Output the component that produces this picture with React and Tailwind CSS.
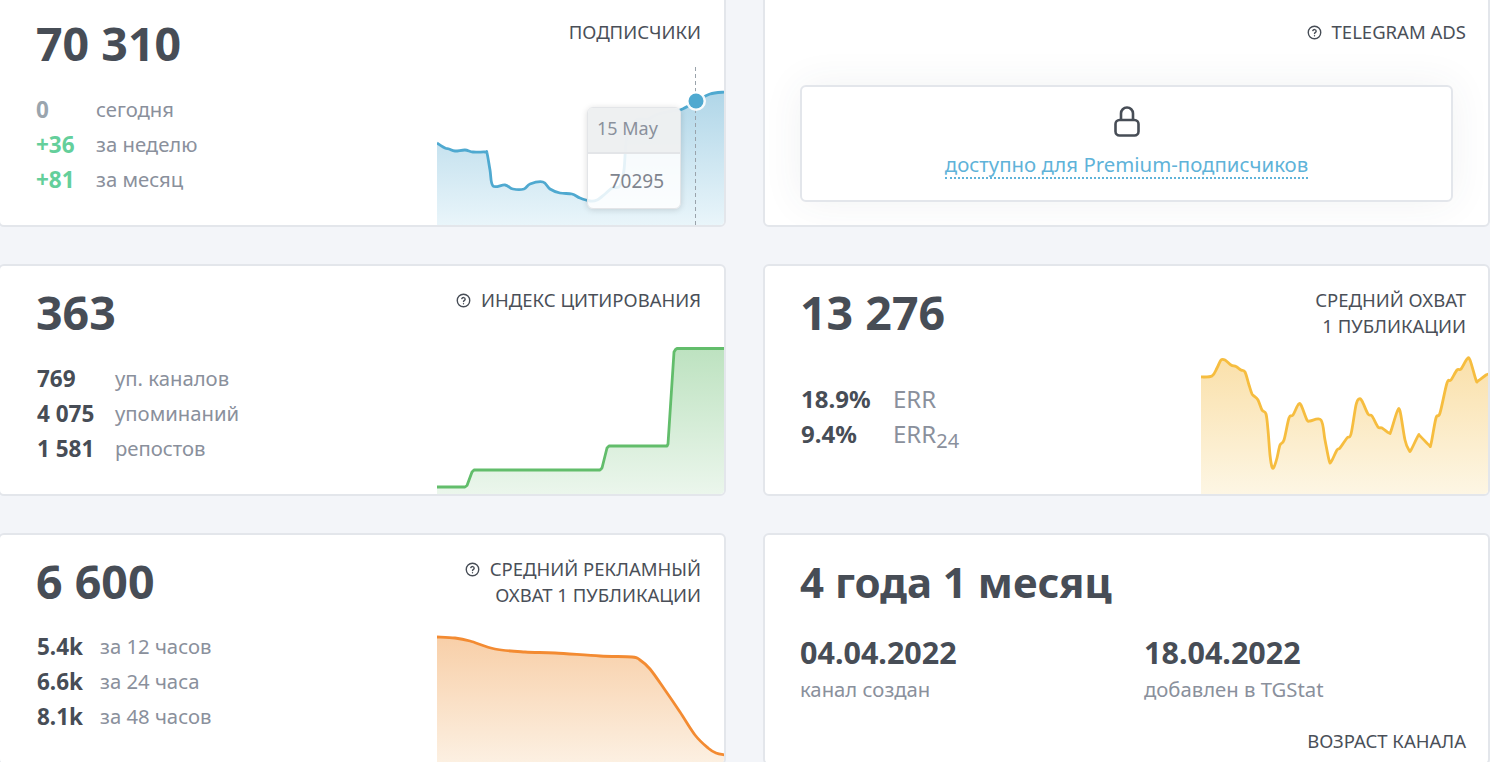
import React from 'react';

// catmull-rom -> cubic bezier, так линии графиков выглядят сглаженными
const smooth = (pts) => {
  let d = `M${pts[0][0]} ${pts[0][1]}`;
  for (let i = 0; i < pts.length - 1; i++) {
    const p0 = pts[i - 1] || pts[i];
    const p1 = pts[i];
    const p2 = pts[i + 1];
    const p3 = pts[i + 2] || p2;
    const c1x = p1[0] + (p2[0] - p0[0]) / 6;
    const c1y = p1[1] + (p2[1] - p0[1]) / 6;
    const c2x = p2[0] - (p3[0] - p1[0]) / 6;
    const c2y = p2[1] - (p3[1] - p1[1]) / 6;
    d += ` C${c1x} ${c1y} ${c2x} ${c2y} ${p2[0]} ${p2[1]}`;
  }
  return d;
};

const straight = (pts) => 'M' + pts.map((p) => `${p[0]} ${p[1]}`).join(' L');

const blue = [[437,143],[445,148],[449,149],[455,151],[465,150],[473,152],[485,152],[487,153],[490,170],[493,186],[505,185],[513,189],[524,189],[530,184],[543,182],[550,189],[560,193],[572,194],[580,198],[590,201],[597,200],[605,194],[612,188],[620,186],[624,170],[627,135],[636,120],[648,119],[658,114],[672,111],[680,110],[690,105],[697,101],[710,94],[725,92]];
const green = [[437,487],[465,487],[467,485.5],[472,472],[474,470],[600,470],[602,468],[607,448],[609,446],[667,446],[668,444],[674,352],[675.5,349.5],[677,348.5],[725,348.5]];
const yellow = [[1201,377],[1212,376],[1217,368],[1221,360],[1225,360],[1231,365],[1236,366.5],[1241,370],[1245,372],[1249,385],[1252,394],[1254,396],[1258,400],[1262,410],[1266,414],[1268,430],[1270,455],[1272,467],[1274,467],[1277,458],[1280,445],[1284,440],[1289,418],[1293,415],[1298,405],[1301,405],[1307,420],[1310,421],[1321,420],[1325,440],[1329,460],[1331,462],[1337,450],[1340,448],[1347,438],[1351,434],[1356,405],[1359,399],[1362,401],[1368,414],[1372,416],[1378,427],[1382,428],[1389,433],[1391,431],[1397,412],[1400,411],[1405,440],[1409,450],[1411,450],[1418,436],[1420,436],[1429,445],[1431,444],[1436,418],[1440,413],[1447,383],[1451,380],[1457,370],[1461,369],[1467,359],[1470,360],[1476,380],[1478,381],[1486,375],[1489,374]];
const orange = [[437,637],[455,638],[470,641],[495,649],[525,652],[555,653],[600,656],[632,657],[640,660],[650,669],[665,690],[680,712],[695,735],[708,748],[716,753],[725,755]];

const Chart = ({ id, points, view, line, top, bottom, stepped, children }) => {
  const [x, y, w, h] = view;
  const d = stepped ? straight(points) : smooth(points);
  const last = points[points.length - 1];
  return (
    <svg viewBox={`${x} ${y} ${w} ${h}`} width={w} height={h} className="absolute bottom-0 right-0">
      <defs>
        <linearGradient id={id} x1="0" y1="0" x2="0" y2="1">
          <stop offset="0" stopColor={top} />
          <stop offset="1" stopColor={bottom} />
        </linearGradient>
      </defs>
      <path d={`${d} L${last[0]} ${y + h} L${points[0][0]} ${y + h} Z`} fill={`url(#${id})`} />
      <path d={d} fill="none" stroke={line} strokeWidth="2.8" strokeLinejoin="round" />
      {children}
    </svg>
  );
};

const HelpIcon = () => (
  <svg width="15" height="15" viewBox="0 0 24 24" fill="none" stroke="#474d56" strokeWidth="2.2" strokeLinecap="round" strokeLinejoin="round" className="shrink-0">
    <circle cx="12" cy="12" r="10" />
    <path d="M9.3 9a2.8 2.8 0 0 1 5.4 1c0 1.8-2.7 2.4-2.7 3.6" />
    <path d="M12 17.2h.01" />
  </svg>
);

const Title = ({ help, lines, className = 'mt-[3px]' }) => (
  <div className={`text-right text-[18.5px] leading-[26px] text-[#4a4f58] ${className}`}>
    {lines.map((t, i) => (
      <div key={t} className="flex items-center justify-end gap-[10px] whitespace-nowrap">
        {help && i === 0 && <HelpIcon />}
        <span>{t}</span>
      </div>
    ))}
  </div>
);

const Stats = ({ rows, col, valueClass = 'text-[#474d56]', className = 'mt-[21px]' }) => (
  <div className={`relative z-10 flex flex-col text-[20.3px] leading-[35px] ${className}`}>
    {rows.map((r) => (
      <div key={r[1]} className="flex">
        <span className={`text-[22.5px] font-bold ${col} ${r[2] || valueClass}`}>{r[0]}</span>
        <span className="text-[#8a909c]">{r[1]}</span>
      </div>
    ))}
  </div>
);

const Card = ({ children, left }) => (
  <div className={`relative h-[232px] overflow-hidden rounded-md border-2 border-[#e3e6eb] bg-white pt-[18px] ${left ? 'pl-[36px] pr-[23px]' : 'pl-[35px] pr-[22px]'}`}>
    {children}
  </div>
);

const Big = ({ children }) => (
  <div className="whitespace-nowrap text-[46.5px] font-bold leading-[56px] text-[#474d56]">{children}</div>
);

const Head = ({ children }) => <div className="relative z-10 flex items-start justify-between">{children}</div>;

export default function App() {
  return (
    <div className="h-[762px] overflow-hidden bg-[#f3f5f9] font-['Noto_Sans',sans-serif]">
      <div className="-ml-[2px] -mt-[5px] grid grid-cols-[728px_727px] gap-x-[37px] gap-y-[37px]">
        {/* подписчики */}
        <Card left>
          <Head>
            <Big>70 310</Big>
            <Title lines={['ПОДПИСЧИКИ']} className="mt-[4px]" />
          </Head>
          <Stats
            col="w-[60px]"
            rows={[
              ['0', 'сегодня', 'text-[#9aa5ae]'],
              ['+36', 'за неделю', 'text-[#64cf9b]'],
              ['+81', 'за месяц', 'text-[#64cf9b]'],
            ]}
          />
          <Chart id="blue" points={blue} view={[437, 62, 287, 163]} line="#4fa9d0" top="#b0d6e8" bottom="#e9f5fa">
            <path d="M695.5 67V225" stroke="#9aa3ab" strokeWidth="1" strokeDasharray="4 3" />
            <circle cx="696" cy="101" r="10" fill="#fff" fillOpacity="0.9" />
            <circle cx="696" cy="101" r="7.5" fill="#4fa9d0" />
          </Chart>
          <div className="absolute left-[587px] top-[110px] w-[94px] overflow-hidden rounded-md border border-[#e3e5e8] bg-white/85 shadow-[0_1px_6px_rgba(0,0,0,0.14)]">
            <div className="h-[46px] border-b-2 border-[#e3e5e8] bg-[#eceef0]/90 pl-[9px] text-[18px] leading-[41px] text-[#8a909c]">15 May</div>
            <div className="pr-[16px] text-right text-[19px] leading-[54px] text-[#7f858f]">70295</div>
          </div>
        </Card>

        {/* telegram ads */}
        <Card>
          <div className="flex justify-end">
            <Title help lines={['TELEGRAM ADS']} className="mt-[4px]" />
          </div>
          <div className="mt-[40px] flex h-[117px] w-[653px] flex-col items-center rounded-md border-2 border-[#e3e6eb] bg-white pt-[19px] shadow-[0_0_40px_rgba(60,70,90,0.07)]">
            <svg width="26" height="31" viewBox="0 0 26 31" fill="none" stroke="#474d56" strokeWidth="2.6">
              <rect x="1.5" y="14" width="23" height="15.5" rx="4" />
              <path d="M7 14V7.5a6 6 0 0 1 12 0V14" />
            </svg>
            <a className="mt-[14px] border-b-2 border-dotted border-[#5fb3d9] text-[20.4px] leading-[26px] text-[#5fb3d9]">
              доступно для Premium-подписчиков
            </a>
          </div>
        </Card>

        {/* индекс цитирования */}
        <Card left>
          <Head>
            <Big>363</Big>
            <Title help lines={['ИНДЕКС ЦИТИРОВАНИЯ']} />
          </Head>
          <Stats
            col="w-[79px] pl-[1px]"
            rows={[
              ['769', 'уп. каналов'],
              ['4 075', 'упоминаний'],
              ['1 581', 'репостов'],
            ]}
          />
          <Chart id="green" stepped points={green} view={[437, 340, 287, 154]} line="#62bd6b" top="#bde2c0" bottom="#ebf6ec" />
        </Card>

        {/* средний охват */}
        <Card>
          <Head>
            <Big>13 276</Big>
            <Title lines={['СРЕДНИЙ ОХВАТ', '1 ПУБЛИКАЦИИ']} />
          </Head>
          <div className="relative z-10 mt-[41px] flex flex-col text-[24px] leading-[35px]">
            <div className="flex">
              <span className="w-[93px] pl-[1px] font-bold text-[#474d56]">18.9%</span>
              <span className="text-[#8a909c]">ERR</span>
            </div>
            <div className="flex">
              <span className="w-[93px] pl-[1px] font-bold text-[#474d56]">9.4%</span>
              <span className="text-[#8a909c]">ERR<sub className="text-[20px] leading-none">24</sub></span>
            </div>
          </div>
          <Chart id="yellow" points={yellow} view={[1201, 350, 287, 144]} line="#f6bd3f" top="#fae0aa" bottom="#fdf6e4" />
        </Card>

        {/* рекламный охват */}
        <Card left>
          <Head>
            <Big>6 600</Big>
            <Title help lines={['СРЕДНИЙ РЕКЛАМНЫЙ', 'ОХВАТ 1 ПУБЛИКАЦИИ']} />
          </Head>
          <Stats
            className="mt-5"
            col="w-[64px] pl-[1px]"
            rows={[
              ['5.4k', 'за 12 часов'],
              ['6.6k', 'за 24 часа'],
              ['8.1k', 'за 48 часов'],
            ]}
          />
          <Chart id="orange" points={orange} view={[437, 630, 287, 133]} line="#f38b32" top="#f8cfa8" bottom="#fcf0e2" />
        </Card>

        {/* возраст канала */}
        <Card>
          <div className="mt-[1px] whitespace-nowrap text-[42px] font-bold leading-[56px] text-[#474d56]">4 года 1 месяц</div>
          <div className="mt-[23px] flex">
            <div className="w-[344px]">
              <div className="text-[30.5px] font-bold leading-[38px] text-[#474d56]">04.04.2022</div>
              <div className="mt-[1px] text-[20.3px] leading-[35px] text-[#8a909c]">канал создан</div>
            </div>
            <div>
              <div className="text-[30.5px] font-bold leading-[38px] text-[#474d56]">18.04.2022</div>
              <div className="mt-[1px] text-[20.3px] leading-[35px] text-[#8a909c]">добавлен в TGStat</div>
            </div>
          </div>
          <div className="mt-[18px] flex justify-end">
            <Title lines={['ВОЗРАСТ КАНАЛА']} />
          </div>
        </Card>
      </div>
    </div>
  );
}
